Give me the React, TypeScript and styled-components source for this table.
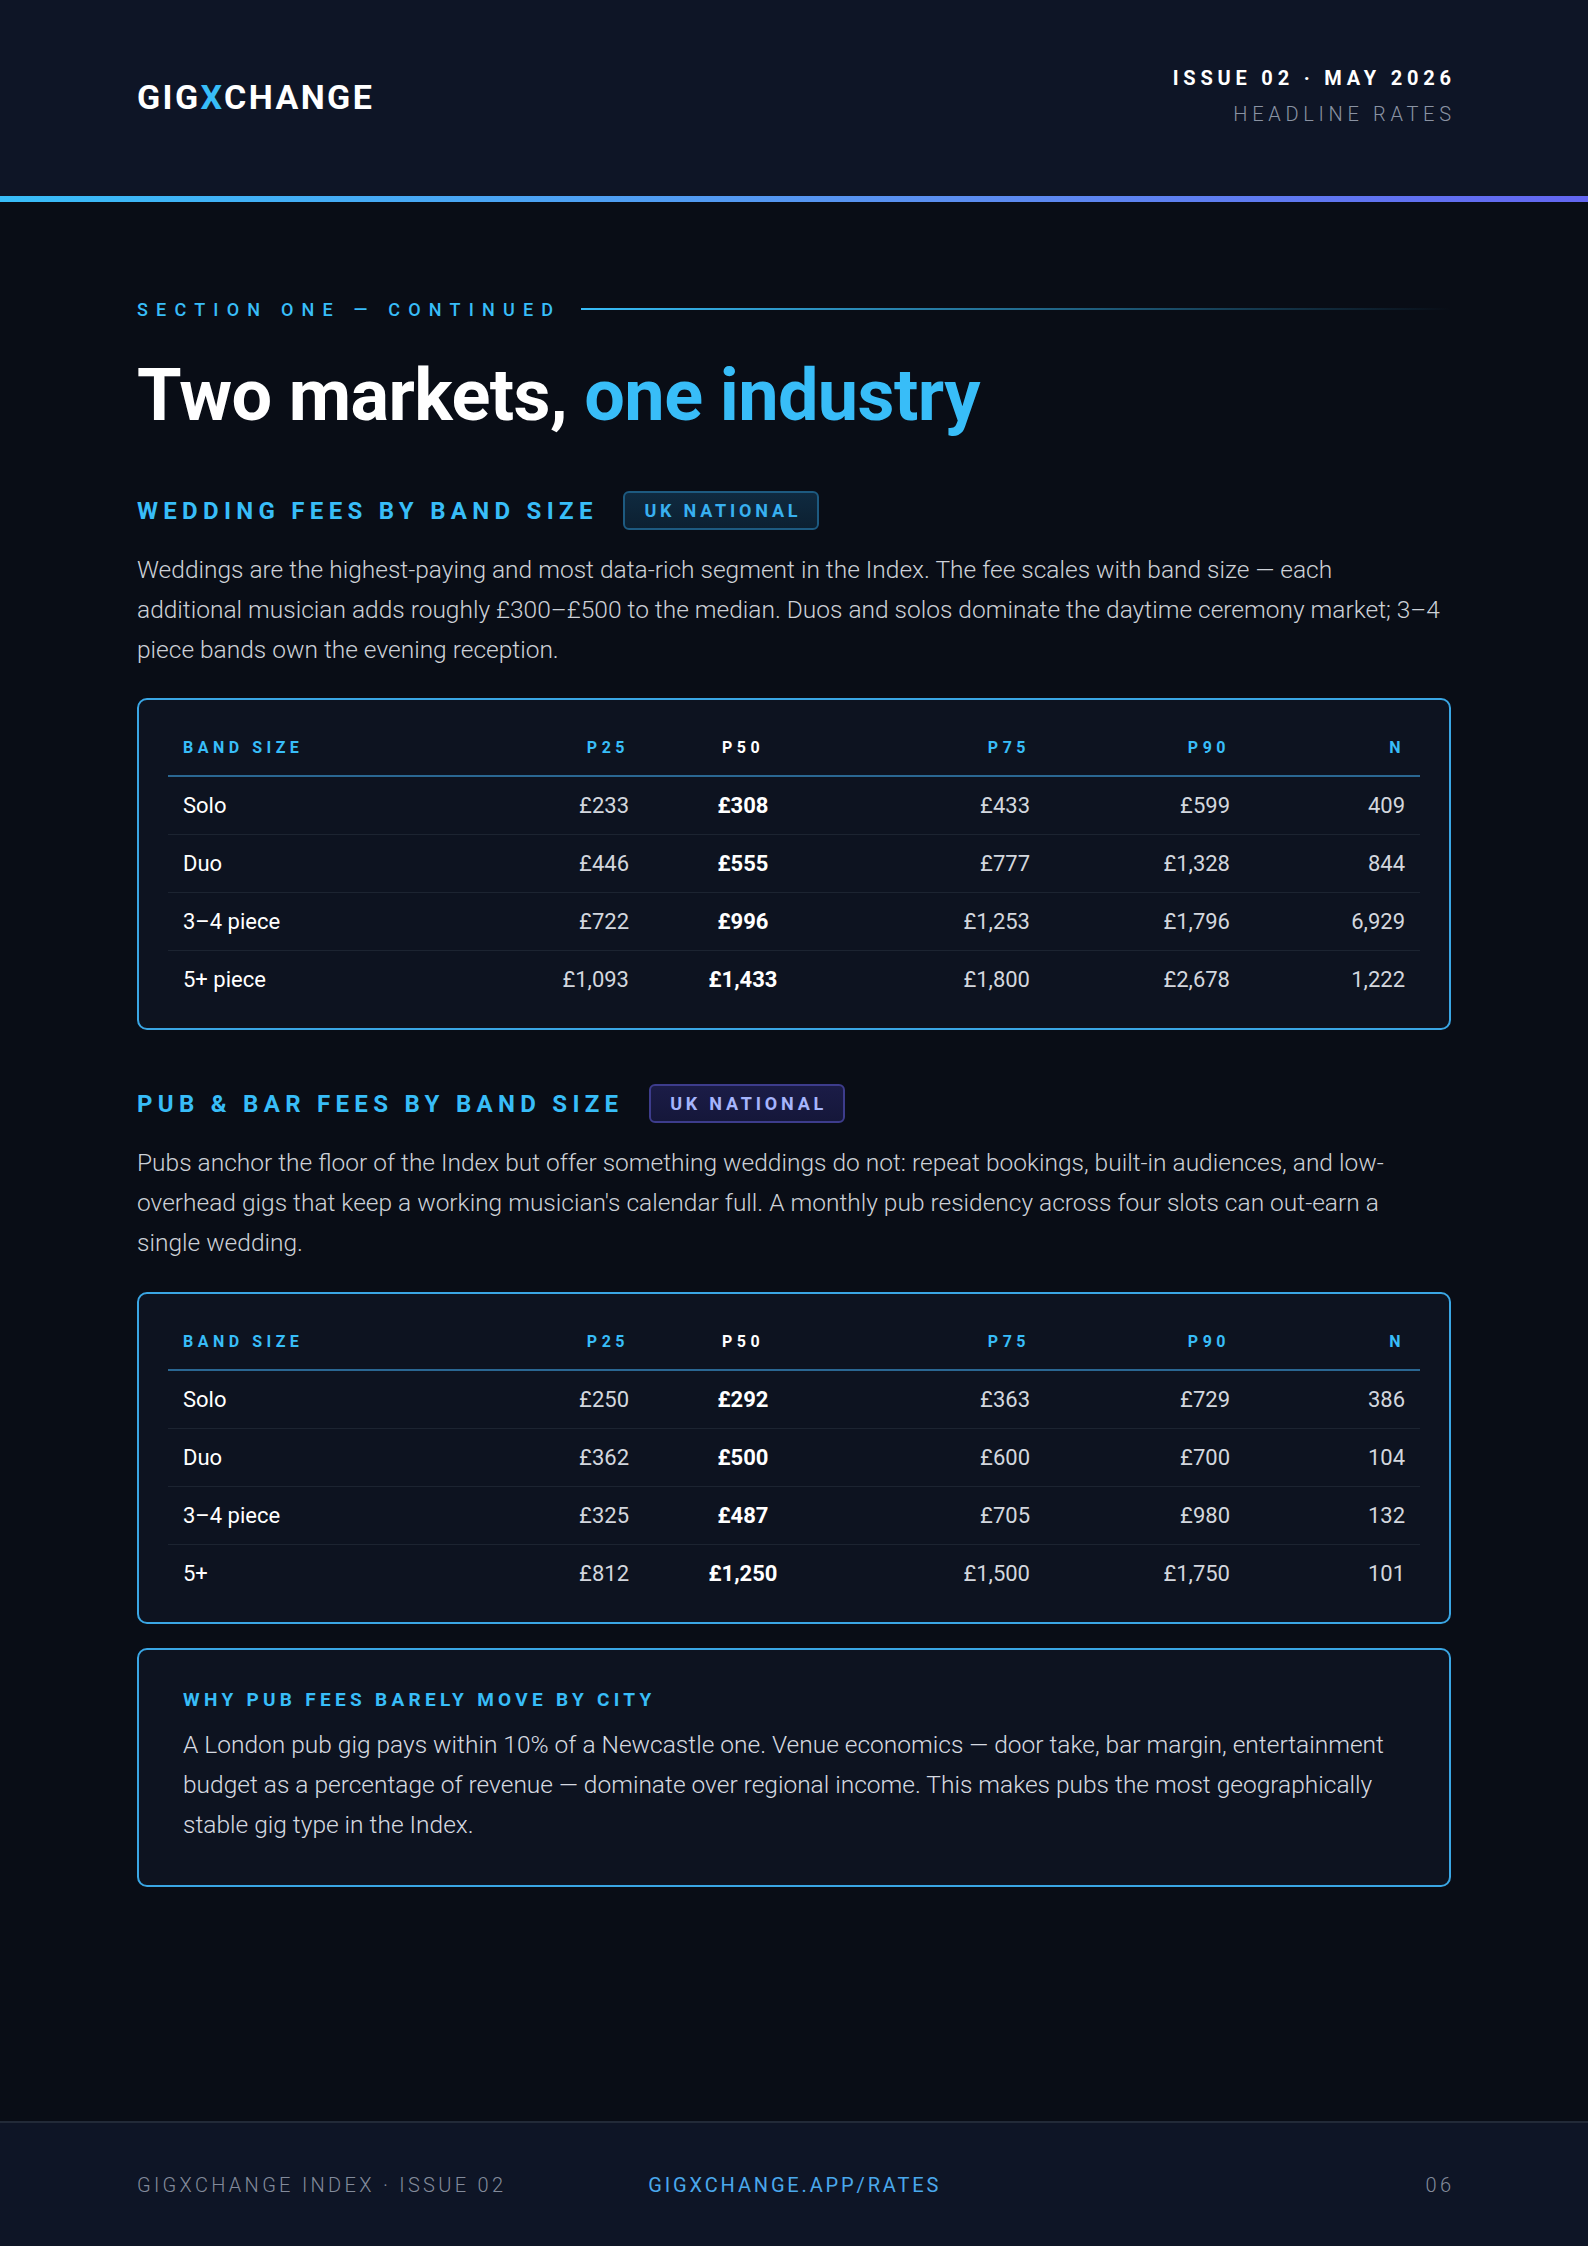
import React from "react";
import styled, { createGlobalStyle } from "styled-components";

const GlobalStyle = createGlobalStyle`
  html, body { margin: 0; padding: 0; background: #090d16; }
  body { font-family: "Roboto", "Liberation Sans", sans-serif; color: #c9ced6; }
  * { box-sizing: border-box; }
`;

const Page = styled.div`
  min-height: 100vh;
  display: flex;
  flex-direction: column;
  background: #090d16;
`;

const Header = styled.header`
  height: 202px;
  background: #0e1526;
  border-bottom: 6px solid transparent;
  border-image: linear-gradient(90deg, #38bdf8 0%, #5b8ef0 60%, #6366f1 100%) 1;
  display: flex;
  align-items: center;
  justify-content: space-between;
  padding: 0 137px;
`;

const Logo = styled.div`
  font-size: 34px;
  font-weight: 700;
  letter-spacing: 2.4px;
  color: #ffffff;
  margin-top: -2px;
`;

const LogoX = styled.span`
  color: #38bdf8;
`;

const IssueBlock = styled.div`
  display: flex;
  flex-direction: column;
  align-items: flex-end;
  gap: 13px;
  margin-top: -4px;
`;

const IssueLine = styled.div<{ $muted?: boolean }>`
  font-size: 20px;
  line-height: 23px;
  letter-spacing: ${(p) => (p.$muted ? "4.7px" : "4.8px")};
  font-weight: ${(p) => (p.$muted ? 300 : 700)};
  color: ${(p) => (p.$muted ? "#8a93a3" : "#ffffff")};
  margin-right: ${(p) => (p.$muted ? "-4.7px" : "-4.8px")};
`;

const Main = styled.main`
  flex: 1;
  padding: 96px 137px 60px;
  display: flex;
  flex-direction: column;
`;

const SectionLabelRow = styled.div`
  display: flex;
  align-items: center;
  gap: 20px;
  height: 22px;
`;

const SectionLabel = styled.div`
  font-size: 18px;
  font-weight: 500;
  letter-spacing: 8.2px;
  color: #38bdf8;
  white-space: nowrap;
`;

const SectionRule = styled.div`
  flex: 1;
  height: 2px;
  background: linear-gradient(90deg, #38bdf8 0%, rgba(56, 189, 248, 0.45) 60%, rgba(56, 189, 248, 0) 100%);
`;

const Headline = styled.h1`
  margin: 36px 0 0;
  font-size: 72px;
  line-height: 80px;
  font-weight: 700;
  letter-spacing: -0.6px;
  color: #ffffff;
`;

const Accent = styled.span`
  color: #38bdf8;
`;

const SubHeadRow = styled.div<{ $top: number }>`
  display: flex;
  align-items: center;
  gap: 31px;
  margin-top: ${(p) => p.$top}px;
  height: 39px;
`;

const SubHead = styled.h2`
  margin: 0;
  font-size: 24px;
  font-weight: 700;
  letter-spacing: 5.3px;
  color: #38bdf8;
  margin-right: -5.3px;
`;

const Badge = styled.span<{ $tone: "blue" | "indigo" }>`
  display: inline-flex;
  align-items: center;
  height: 39px;
  padding: 0 16px 0 19px;
  border-radius: 6px;
  font-size: 18px;
  font-weight: 700;
  letter-spacing: 3.8px;
  border: 2px solid ${(p) => (p.$tone === "blue" ? "#1d5a80" : "#3d3c8c")};
  background: ${(p) =>
    p.$tone === "blue"
      ? "linear-gradient(180deg, #0f2a40 0%, #0c2031 100%)"
      : "linear-gradient(180deg, #1b1c47 0%, #15173a 100%)"};
  color: ${(p) => (p.$tone === "blue" ? "#38b0f0" : "#a5b4fc")};
`;

const Paragraph = styled.p`
  margin: 20px 0 0;
  font-size: 24.5px;
  line-height: 40px;
  font-weight: 300;
  color: #cdd1d8;
  white-space: nowrap;
`;

const TableCard = styled.div<{ $top: number }>`
  margin-top: ${(p) => p.$top}px;
  border: 2px solid #3aa6e4;
  border-radius: 10px;
  background: #0d1320;
  padding: 20px 29px;
`;

const Table = styled.table`
  width: 100%;
  border-collapse: collapse;
  table-layout: fixed;
`;

type Align = "left" | "center" | "right";

const Th = styled.th<{ $align: Align; $strong?: boolean }>`
  height: 56px;
  padding: 0 15px;
  text-align: ${(p) => p.$align};
  font-size: 16px;
  font-weight: 700;
  letter-spacing: 4.5px;
  color: ${(p) => (p.$strong ? "#ffffff" : "#38bdf8")};
  border-bottom: 2px solid #2a6792;
  vertical-align: middle;
`;

const Tr = styled.tr`
  & + & td {
    border-top: 1px solid #1c2431;
  }
`;

const Td = styled.td<{ $align: Align; $strong?: boolean; $label?: boolean }>`
  height: 58px;
  padding: 0 15px;
  text-align: ${(p) => p.$align};
  font-size: 22px;
  font-weight: ${(p) => (p.$strong ? 700 : 400)};
  color: ${(p) => (p.$strong || p.$label ? "#ffffff" : "#d3d7de")};
  vertical-align: middle;
  white-space: nowrap;
`;

const Callout = styled.div`
  margin-top: 24px;
  border: 2px solid #3aa6e4;
  border-radius: 10px;
  background: #0d1320;
  padding: 39px 44px 40px;
`;

const CalloutTitle = styled.div`
  font-size: 19px;
  line-height: 22px;
  font-weight: 700;
  letter-spacing: 4.3px;
  color: #38bdf8;
`;

const CalloutText = styled.p`
  margin: 14px 0 0;
  font-size: 24.5px;
  line-height: 40px;
  font-weight: 300;
  color: #d6dae0;
  white-space: nowrap;
`;

const Footer = styled.footer`
  height: 125px;
  background: #0e1526;
  border-top: 2px solid #222a38;
  display: flex;
  align-items: center;
  padding: 0 137px;
  font-size: 20px;
  letter-spacing: 3.3px;
`;

const FooterLeft = styled.div`
  display: flex;
  gap: 142px;
  flex: 1;
`;

const FooterText = styled.span<{ $link?: boolean }>`
  color: ${(p) => (p.$link ? "#4aa8ec" : "#838b9b")};
  font-weight: ${(p) => (p.$link ? 400 : 300)};
  letter-spacing: ${(p) => (p.$link ? "2.85px" : "3.3px")};
`;

const PageNum = styled(FooterText)`
  margin-right: -3.3px;
`;

const cols = [276, 200, 198, 203, 200, 175];
const headers: { label: string; align: Align; strong?: boolean }[] = [
  { label: "BAND SIZE", align: "left" },
  { label: "P25", align: "right" },
  { label: "P50", align: "center", strong: true },
  { label: "P75", align: "right" },
  { label: "P90", align: "right" },
  { label: "N", align: "right" },
];

type Row = [string, string, string, string, string, string];

const weddingRows: Row[] = [
  ["Solo", "£233", "£308", "£433", "£599", "409"],
  ["Duo", "£446", "£555", "£777", "£1,328", "844"],
  ["3–4 piece", "£722", "£996", "£1,253", "£1,796", "6,929"],
  ["5+ piece", "£1,093", "£1,433", "£1,800", "£2,678", "1,222"],
];

const pubRows: Row[] = [
  ["Solo", "£250", "£292", "£363", "£729", "386"],
  ["Duo", "£362", "£500", "£600", "£700", "104"],
  ["3–4 piece", "£325", "£487", "£705", "£980", "132"],
  ["5+", "£812", "£1,250", "£1,500", "£1,750", "101"],
];

const weddingText = [
  "Weddings are the highest-paying and most data-rich segment in the Index. The fee scales with band size — each",
  "additional musician adds roughly £300–£500 to the median. Duos and solos dominate the daytime ceremony market; 3–4",
  "piece bands own the evening reception.",
];

const pubText = [
  "Pubs anchor the floor of the Index but offer something weddings do not: repeat bookings, built-in audiences, and low-",
  "overhead gigs that keep a working musician's calendar full. A monthly pub residency across four slots can out-earn a",
  "single wedding.",
];

const calloutText = [
  "A London pub gig pays within 10% of a Newcastle one. Venue economics — door take, bar margin, entertainment",
  "budget as a percentage of revenue — dominate over regional income. This makes pubs the most geographically",
  "stable gig type in the Index.",
];

function Lines({ lines }: { lines: string[] }) {
  return (
    <>
      {lines.map((l, i) => (
        <React.Fragment key={i}>
          {l}
          {i < lines.length - 1 && <br />}
        </React.Fragment>
      ))}
    </>
  );
}

function FeeTable({ rows, top }: { rows: Row[]; top: number }) {
  return (
    <TableCard $top={top}>
      <Table>
        <colgroup>
          {cols.map((w, i) => (
            <col key={i} style={{ width: w }} />
          ))}
        </colgroup>
        <thead>
          <tr>
            {headers.map((h) => (
              <Th key={h.label} $align={h.align} $strong={h.strong}>
                {h.label}
              </Th>
            ))}
          </tr>
        </thead>
        <tbody>
          {rows.map((r) => (
            <Tr key={r[0]}>
              {r.map((v, i) => (
                <Td key={i} $align={headers[i].align} $strong={i === 2} $label={i === 0}>
                  {v}
                </Td>
              ))}
            </Tr>
          ))}
        </tbody>
      </Table>
    </TableCard>
  );
}

export default function App() {
  return (
    <Page>
      <GlobalStyle />
      <Header>
        <Logo>
          GIG<LogoX>X</LogoX>CHANGE
        </Logo>
        <IssueBlock>
          <IssueLine>ISSUE 02 · MAY 2026</IssueLine>
          <IssueLine $muted>HEADLINE RATES</IssueLine>
        </IssueBlock>
      </Header>
      <Main>
        <SectionLabelRow>
          <SectionLabel>SECTION ONE — CONTINUED</SectionLabel>
          <SectionRule />
        </SectionLabelRow>
        <Headline>
          Two markets, <Accent>one industry</Accent>
        </Headline>

        <SubHeadRow $top={55}>
          <SubHead>WEDDING FEES BY BAND SIZE</SubHead>
          <Badge $tone="blue">UK NATIONAL</Badge>
        </SubHeadRow>
        <Paragraph>
          <Lines lines={weddingText} />
        </Paragraph>
        <FeeTable rows={weddingRows} top={28} />

        <SubHeadRow $top={54}>
          <SubHead>PUB &amp; BAR FEES BY BAND SIZE</SubHead>
          <Badge $tone="indigo">UK NATIONAL</Badge>
        </SubHeadRow>
        <Paragraph>
          <Lines lines={pubText} />
        </Paragraph>
        <FeeTable rows={pubRows} top={29} />

        <Callout>
          <CalloutTitle>WHY PUB FEES BARELY MOVE BY CITY</CalloutTitle>
          <CalloutText>
            <Lines lines={calloutText} />
          </CalloutText>
        </Callout>
      </Main>
      <Footer>
        <FooterLeft>
          <FooterText>GIGXCHANGE INDEX · ISSUE 02</FooterText>
          <FooterText $link>GIGXCHANGE.APP/RATES</FooterText>
        </FooterLeft>
        <PageNum>06</PageNum>
      </Footer>
    </Page>
  );
}
